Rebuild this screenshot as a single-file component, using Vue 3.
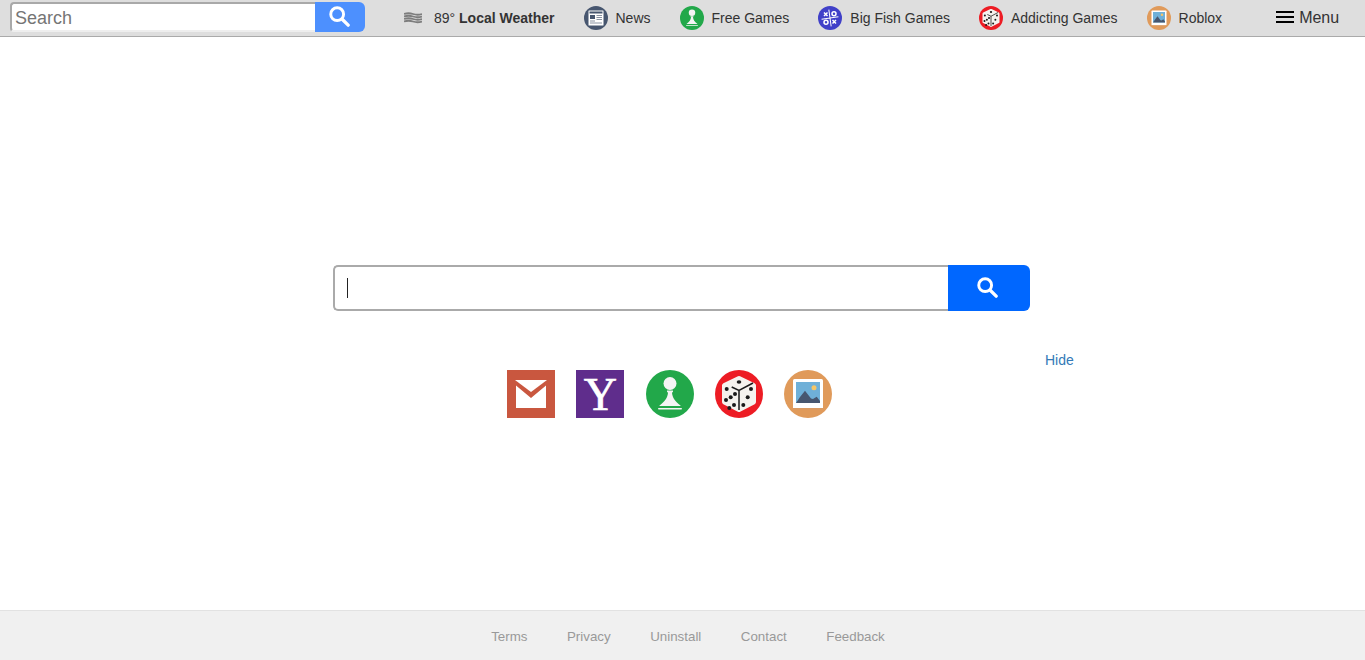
<script setup>
const navItems = [
  { icon: 'news', label: 'News' },
  { icon: 'pawn', label: 'Free Games' },
  { icon: 'ttt', label: 'Big Fish Games' },
  { icon: 'dice', label: 'Addicting Games' },
  { icon: 'photo', label: 'Roblox' }
]

const tiles = ['gmail', 'yahoo', 'pawn', 'dice', 'photo']
const footerLinks = ['Terms', 'Privacy', 'Uninstall', 'Contact', 'Feedback']
</script>

<template>
  <div class="page">
    <!-- shared icons -->
    <svg class="defs" aria-hidden="true">
      <defs>
        <symbol id="i-search" viewBox="0 0 24 24">
          <circle cx="10" cy="10" r="7" fill="none" stroke="#fff" stroke-width="3.2" />
          <path d="M15.5 15.5 L22 22" stroke="#fff" stroke-width="3.6" stroke-linecap="round" />
        </symbol>
        <symbol id="i-news" viewBox="0 0 48 48">
          <circle cx="24" cy="24" r="24" fill="#47566f" />
          <rect x="9" y="9" width="30" height="30" rx="1" fill="#fff" />
          <rect x="11" y="11" width="26" height="4" fill="#47566f" />
          <rect x="12" y="18" width="10" height="8" fill="#47566f" />
          <path d="M25 19h11M25 23h11M25 27h11M12 30h10M12 34h24" stroke="#8b94a3" stroke-width="2" />
        </symbol>
        <symbol id="i-pawn" viewBox="0 0 48 48">
          <circle cx="24" cy="24" r="24" fill="#22a84a" />
          <circle cx="24" cy="13.500" r="6.500" fill="#f4f4f4" />
          <path d="M21 20.500h6v1.200l-1 1c.4 5 3.200 8.800 8.500 12.800v.5h-21v-.5c5.300-4 8.100-7.800 8.500-12.800l-1-1z" fill="#f4f4f4" />
          <rect x="12" y="38" width="24" height="1.600" rx=".8" fill="#f4f4f4" />
        </symbol>
        <symbol id="i-ttt" viewBox="0 0 48 48">
          <circle cx="24" cy="24" r="24" fill="#4040c8" />
          <path d="M24 7 L24 41 M7 24 L41 24" stroke="#fff" stroke-width="2" transform="rotate(-8 24 24)" />
          <path d="M12 13l7 7M19 13l-7 7M29 28l7 7M36 28l-7 7" stroke="#fff" stroke-width="3" />
          <circle cx="32" cy="15.500" r="4" fill="none" stroke="#fff" stroke-width="3" />
          <circle cx="16" cy="32.500" r="4" fill="none" stroke="#fff" stroke-width="3" />
        </symbol>
        <symbol id="i-dice" viewBox="0 0 48 48">
          <circle cx="24" cy="24" r="24" fill="#ed1c24" />
          <path d="M24 8.500 L38.500 15.500 L38.500 32 L24 39.500 L9.500 32 L9.500 15.500 Z" fill="#f5f2ee" stroke="#f5f2ee" stroke-width="5" stroke-linejoin="round" />
          <path d="M16.700 17 L24 20.500 L38 13 M24 20.500 L24 40" fill="none" stroke="#1a1a1a" stroke-width="1.500" />
          <ellipse cx="24" cy="12" rx="2.300" ry="1.800" fill="#1a1a1a" />
          <g fill="#1a1a1a">
            <circle cx="11.700" cy="19" r="2" />
            <circle cx="20" cy="24" r="2" />
            <circle cx="15.700" cy="27.300" r="2" />
            <circle cx="11" cy="30" r="2" />
            <circle cx="19" cy="35" r="2" />
            <circle cx="14.300" cy="38" r="2" />
            <circle cx="36" cy="19" r="2" />
            <circle cx="32.700" cy="27.300" r="2" />
            <circle cx="28.300" cy="35" r="2" />
          </g>
        </symbol>
        <symbol id="i-photo" viewBox="0 0 48 48">
          <circle cx="24" cy="24" r="24" fill="#e09a5a" />
          <rect x="9" y="9" width="30" height="30" rx="1.500" fill="#fff" />
          <rect x="12" y="12" width="24" height="21" fill="#6fb0d8" />
          <circle cx="30" cy="17.700" r="2.500" fill="#f6c667" />
          <path d="M12 33 L16 27 L21 20.700 L27 28.500 L29 29 L32.700 26.700 L36 31 V33 Z" fill="#47566f" />
          <rect x="9" y="38" width="30" height="1.500" fill="#d99a64" />
        </symbol>
        <symbol id="i-gmail" viewBox="0 0 48 48">
          <rect width="48" height="48" fill="#c9573f" />
          <path d="M8 10 H40 L24 22 Z" fill="#fff" />
          <path d="M9 15.500 L24 28 L39 15.500 V38 H9 Z" fill="#fff" />
        </symbol>
        <symbol id="i-yahoo" viewBox="0 0 48 48">
          <rect width="48" height="48" fill="#5f2d8c" />
        </symbol>
      </defs>
    </svg>

    <header class="topbar">
      <form class="top-search" @submit.prevent>
        <input class="top-input" type="text" placeholder="Search" />
        <button class="top-btn" type="button">
          <svg class="top-btn-icon"><use href="#i-search" /></svg>
        </button>
      </form>

      <nav class="nav">
        <a class="nav-item weather">
          <svg class="weather-icon" viewBox="0 0 18 12">
            <path d="M0 2q4.500-1.500 9 0t9 0M0 4.500q4.500-1.500 9 0t9 0M0 7q4.500-1.500 9 0t9 0M0 9.500q4.500-1.500 9 0t9 0" fill="none" stroke="#7d7d7d" stroke-width="1.800" />
          </svg>
          <span>89° <b>Local Weather</b></span>
        </a>
        <a v-for="item in navItems" :key="item.label" class="nav-item">
          <svg class="nav-icon"><use :href="`#i-${item.icon}`" /></svg>
          <span>{{ item.label }}</span>
        </a>
      </nav>

      <a class="menu">
        <span class="burger"><i></i><i></i><i></i></span>
        <span>Menu</span>
      </a>
    </header>

    <main class="main">
      <div class="search">
        <div class="search-box"><span class="caret"></span></div>
        <button class="search-btn" type="button">
          <svg class="search-btn-icon"><use href="#i-search" /></svg>
        </button>
      </div>

      <div class="tiles-wrap">
        <a class="hide">Hide</a>
        <div class="tiles">
          <a v-for="t in tiles" :key="t" class="tile">
            <svg class="tile-icon"><use :href="`#i-${t}`" /></svg>
            <span v-if="t === 'yahoo'" class="yahoo-y">Y</span>
          </a>
        </div>
      </div>
    </main>

    <footer class="footer">
      <a v-for="link in footerLinks" :key="link">{{ link }}</a>
    </footer>
  </div>
</template>

<style>
html, body {
  margin: 0;
  background: #fff;
}
</style>

<style scoped>
.page {
  height: 660px;
  display: flex;
  flex-direction: column;
  font-family: "Liberation Sans", Arial, sans-serif;
  color: #333;
  overflow: hidden;
}

.defs {
  width: 0;
  height: 0;
  position: absolute;
}

/* top bar */
.topbar {
  height: 36px;
  flex: none;
  display: flex;
  align-items: center;
  background: #dedede;
  border-bottom: 1px solid #aaa;
  padding-left: 10px;
}

.top-search {
  display: flex;
  width: 355px;
  height: 30px;
  margin-top: -2px;
  flex: none;
}

.top-input {
  width: 305px;
  height: 30px;
  box-sizing: border-box;
  border: 2px solid #a9a9a9;
  border-right: 0;
  border-bottom-color: #eee;
  border-radius: 4px 0 0 4px;
  padding: 2px 3px 0;
  font: 18px "Liberation Sans", Arial, sans-serif;
  background: #fff;
  outline: none;
}

.top-input::placeholder {
  color: #757575;
  opacity: 1;
}

.top-btn {
  width: 50px;
  height: 30px;
  border: 0;
  padding: 0 3px 3px 0;
  background: #4d90fe;
  border-radius: 0 6px 6px 0;
  display: flex;
  align-items: center;
  justify-content: center;
}

.top-btn-icon {
  width: 22px;
  height: 22px;
}

.nav {
  display: flex;
  align-items: center;
  margin-left: 39px;
  gap: 29px;
  flex: none;
}

.nav-item {
  display: flex;
  align-items: center;
  gap: 8px;
  font-size: 14px;
  color: #333;
  white-space: nowrap;
}

.weather {
  gap: 12px;
}

.weather-icon {
  width: 18px;
  height: 12px;
}

.nav-icon {
  width: 24px;
  height: 24px;
}

.menu {
  margin-left: 54px;
  display: flex;
  align-items: center;
  gap: 5px;
  font-size: 16px;
  color: #333;
}

.burger {
  width: 18px;
  display: flex;
  flex-direction: column;
  gap: 3px;
  margin-top: -2px;
}

.burger i {
  display: block;
  height: 2px;
  background: #000;
}

/* main search */
.main {
  flex: 1;
  padding-top: 228px;
  box-sizing: border-box;
}

.search {
  display: flex;
  width: 697px;
  height: 46px;
  margin-left: 333px;
}

.search-box {
  width: 615px;
  box-sizing: border-box;
  border: 2px solid #aaa;
  border-right: 0;
  border-radius: 5px 0 0 5px;
  display: flex;
  align-items: center;
  padding-left: 12px;
}

.caret {
  width: 1px;
  height: 20px;
  background: #222;
}

.search-btn {
  width: 82px;
  border: 0;
  padding: 0 5px 3px 0;
  background: #0067ff;
  border-radius: 0 6px 6px 0;
  display: flex;
  align-items: center;
  justify-content: center;
}

.search-btn-icon {
  width: 22px;
  height: 22px;
}

.tiles-wrap {
  position: relative;
  margin-top: 59px;
  padding-left: 507px;
}

.tiles {
  display: flex;
  gap: 21.3px;
}

.tile {
  position: relative;
  width: 48px;
  height: 48px;
  display: block;
}

.tile-icon {
  width: 48px;
  height: 48px;
  display: block;
}

.yahoo-y {
  position: absolute;
  inset: 0;
  text-align: center;
  font: 46px/49px "Liberation Serif", serif;
  -webkit-text-stroke: 0.7px #fff;
  color: #fff;
}

.hide {
  position: absolute;
  left: 1045px;
  top: -18px;
  font-size: 14px;
  color: #337ab7;
}

/* footer */
.footer {
  height: 48px;
  flex: none;
  background: #f0f0f0;
  border-top: 1px solid #e2e2e2;
  display: flex;
  align-items: center;
  justify-content: center;
  gap: 39.5px;
  padding: 1px 0 0 11px;
}

.footer a {
  color: #999;
  font-size: 13.33px;
}
</style>
